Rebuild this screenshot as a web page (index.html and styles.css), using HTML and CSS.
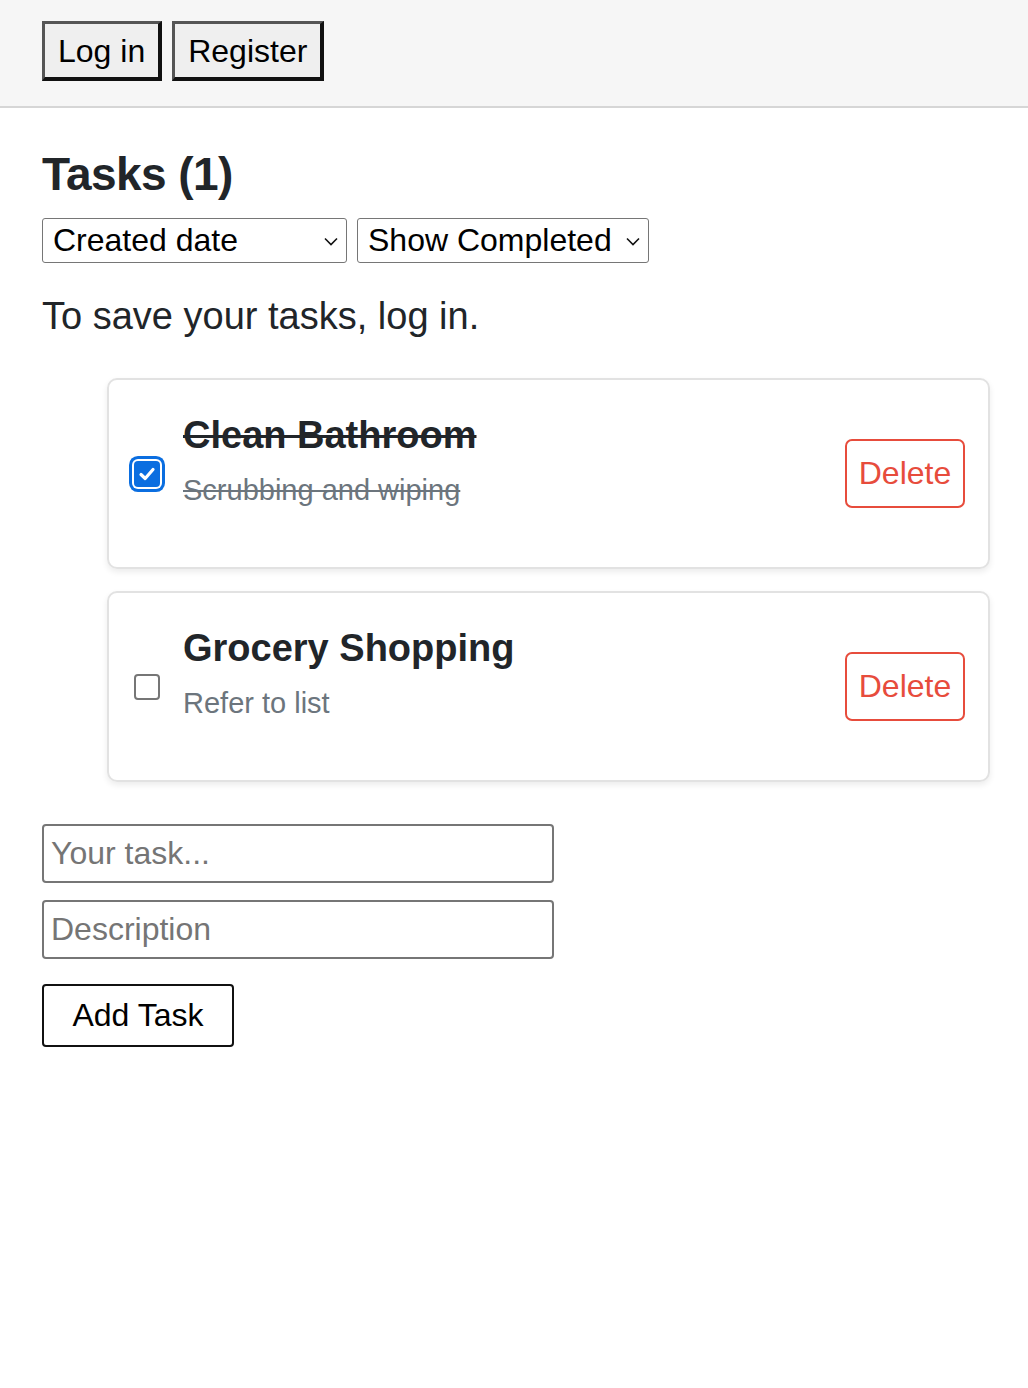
FILE: index.html
```html
<!DOCTYPE html>
<html lang="en">
<head>
<meta charset="utf-8">
<title>Tasks</title>
<link rel="stylesheet" href="styles.css">
</head>
<body>
<header class="topbar">
  <button class="auth-btn">Log in</button>
  <button class="auth-btn">Register</button>
</header>
<main class="content">
  <h1 class="title">Tasks (1)</h1>
  <div class="filters">
    <div class="select select-sort">
      <span>Created date</span>
      <svg class="chev" width="14" height="9" viewBox="0 0 14 9"><path d="M1 1.5 L7 7.5 L13 1.5" fill="none" stroke="#111" stroke-width="1.6"/></svg>
    </div>
    <div class="select select-show">
      <span>Show Completed</span>
      <svg class="chev" width="14" height="9" viewBox="0 0 14 9"><path d="M1 1.5 L7 7.5 L13 1.5" fill="none" stroke="#111" stroke-width="1.6"/></svg>
    </div>
  </div>
  <p class="notice">To save your tasks, log in.</p>
  <ul class="task-list">
    <li class="task done">
      <span class="checkbox checked">
        <svg width="22" height="22" viewBox="0 0 22 22"><path d="M5 11.5 L9.2 15.5 L17 6.5" fill="none" stroke="#fff" stroke-width="3.2" stroke-linecap="round" stroke-linejoin="round"/></svg>
      </span>
      <div class="task-text">
        <h2 class="task-title">Clean Bathroom</h2>
        <p class="task-desc">Scrubbing and wiping</p>
      </div>
      <button class="delete-btn">Delete</button>
    </li>
    <li class="task">
      <span class="checkbox"></span>
      <div class="task-text">
        <h2 class="task-title">Grocery Shopping</h2>
        <p class="task-desc">Refer to list</p>
      </div>
      <button class="delete-btn">Delete</button>
    </li>
  </ul>
  <form class="add-form">
    <input class="field" type="text" placeholder="Your task...">
    <input class="field" type="text" placeholder="Description">
    <button class="add-btn" type="button">Add Task</button>
  </form>
</main>
</body>
</html>
```
FILE: styles.css
```css
* { box-sizing: border-box; }
html, body { margin: 0; padding: 0; background: #fff; }
body {
  font-family: "Liberation Sans", Arial, Helvetica, sans-serif;
  color: #212529;
}
.topbar {
  background: #f6f6f6;
  border-bottom: 2px solid #d6d6d6;
  padding: 21px 42px 0;
  height: 108px;
  display: flex;
  gap: 10px;
  align-items: flex-start;
}
.auth-btn {
  font-family: "Liberation Sans", Arial, sans-serif;
  font-size: 32px;
  color: #000;
  background: #efefef;
  border-style: solid;
  border-width: 3px 4px 4px 3px;
  border-color: #555 #111 #111 #555;
  height: 60px;
  padding: 0 13px;
  line-height: 1;
}
.content {
  padding: 0 38px 0 42px;
}
.title {
  font-size: 46px;
  font-weight: 700;
  letter-spacing: -0.6px;
  line-height: 56px;
  margin: 38px 0 0;
}
.filters {
  display: flex;
  gap: 10px;
  margin-top: 16px;
}
.select {
  height: 45px;
  border: 1px solid #767676;
  border-radius: 3px;
  display: flex;
  align-items: center;
  justify-content: space-between;
  padding: 0 8px 0 10px;
  font-size: 32px;
  color: #000;
  background: #fff;
}
.select-sort { width: 305px; }
.select-show { width: 292px; }
.chev { margin-top: 2px; }
.notice {
  font-size: 38px;
  margin: 30px 0 0;
  line-height: 46px;
}
.task-list {
  list-style: none;
  margin: 39px 0 0;
  padding: 0 0 0 65px;
  display: flex;
  flex-direction: column;
  gap: 22px;
}
.task {
  height: 191px;
  border: 2px solid #e2e2e2;
  border-radius: 10px;
  box-shadow: 0 3px 6px rgba(0,0,0,0.08);
  display: flex;
  align-items: center;
  padding: 0 23px 0 24px;
}
.checkbox {
  width: 26px;
  height: 26px;
  border: 2px solid #767676;
  border-radius: 4px;
  flex: none;
  margin: 0 23px 0 1px;
  display: flex;
  align-items: center;
  justify-content: center;
}
.checkbox.checked {
  width: 26px;
  height: 26px;
  border: none;
  background: #0b6ee0;
  box-shadow: 0 0 0 2px #fff, 0 0 0 5px #0b6ee0;
}
.task-text {
  flex: 1;
  margin-bottom: 28px;
}
.task-title {
  font-size: 38px;
  font-weight: 700;
  letter-spacing: 0;
  margin: 0;
  line-height: 46px;
}
.task-desc {
  font-size: 29px;
  color: #6c757d;
  margin: 15px 0 0;
  line-height: 34px;
}
.done .task-title, .done .task-desc { text-decoration: line-through; }
.delete-btn {
  font-family: "Liberation Sans", Arial, sans-serif;
  font-size: 32px;
  color: #e74c3c;
  background: #fff;
  border: 2px solid #e74c3c;
  border-radius: 7px;
  width: 120px;
  height: 69px;
  padding: 0;
  flex: none;
}
.add-form {
  display: flex;
  flex-direction: column;
  align-items: flex-start;
  margin-top: 42px;
}
.field {
  width: 512px;
  height: 59px;
  border: 2px solid #767676;
  border-radius: 4px;
  font-family: "Liberation Sans", Arial, sans-serif;
  font-size: 32px;
  padding: 0 7px;
  margin-bottom: 17px;
  color: #000;
}
.field::placeholder { color: #757575; }
.add-btn {
  margin-top: 8px;
  font-family: "Liberation Sans", Arial, sans-serif;
  font-size: 32px;
  color: #000;
  background: #fff;
  border: 2px solid #111;
  border-radius: 4px;
  width: 192px;
  height: 63px;
  padding: 0;
}
```
